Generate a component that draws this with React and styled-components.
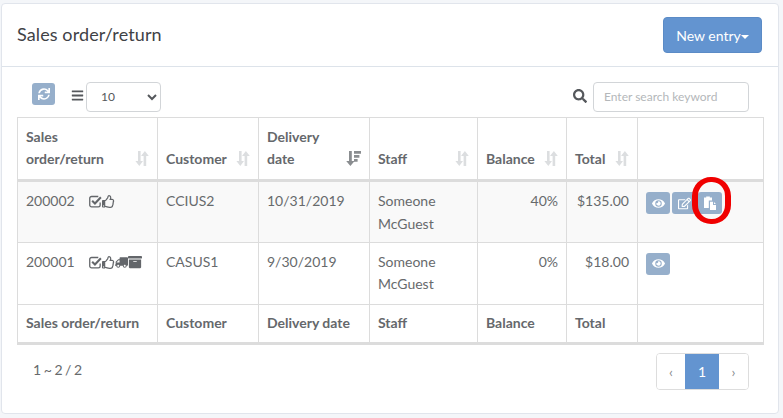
import styled, { createGlobalStyle } from 'styled-components';
import {
  FaArchive,
  FaBars,
  FaEye,
  FaRegEdit,
  FaRegThumbsUp,
  FaSearch,
  FaSync,
  FaTruck,
} from 'react-icons/fa';

const GlobalStyle = createGlobalStyle`
  html, body {
    margin: 0;
    padding: 0;
    background: #f4f6f9;
  }
  body {
    font-family: Lato, "Liberation Sans", sans-serif;
    font-size: 14px;
    color: #676a6c;
  }
`;

function PasteIcon() {
  return (
    <svg width="14" height="14" viewBox="0 0 14 14" fill="#ffffff">
      <path d="M1 1.5h2.2V.6h3.6v.9H9v3H5.8V12H1z" />
      <path d="M7 5.8h3v3.2h3V14H7z" />
      <path d="M11 5.9 12.9 8H11z" />
    </svg>
  );
}

function CheckIcon() {
  return (
    <svg width="13" height="13" viewBox="0 0 14 14" fill="none" stroke="#63666a">
      <path
        strokeWidth="1.4"
        d="M12 8v2.8a2 2 0 0 1-2 2H2.8a2 2 0 0 1-2-2V3.6a2 2 0 0 1 2-2H10"
      />
      <path strokeWidth="2.2" d="M3.4 6.2l3 3 6.4-6.8" />
    </svg>
  );
}

const columns = [
  { label: 'Sales order/return', head: ['Sales', 'order/return'], width: 140 },
  { label: 'Customer', head: ['Customer'], width: 101 },
  { label: 'Delivery date', head: ['Delivery', 'date'], width: 111, sorted: true },
  { label: 'Staff', head: ['Staff'], width: 108 },
  { label: 'Balance', head: ['Balance'], width: 89 },
  { label: 'Total', head: ['Total'], width: 71 },
  { label: '', head: [], width: 126, noSort: true },
];

const rows = [
  {
    id: '200002',
    customer: 'CCIUS2',
    date: '10/31/2019',
    balance: '40%',
    total: '$135.00',
    shipped: false,
    height: 61.5,
    actions: [FaEye, FaRegEdit, PasteIcon],
  },
  {
    id: '200001',
    customer: 'CASUS1',
    date: '9/30/2019',
    balance: '0%',
    total: '$18.00',
    shipped: true,
    height: 62,
    actions: [FaEye],
  },
];

function SortIcon({ sorted }) {
  if (sorted) {
    return (
      <svg width="15" height="15" viewBox="0 0 15 15" fill="#8a8d90">
        <path d="M3 0h2.8v10H8.6l-4.2 5L.2 10H3z" />
        <path d="M8 0h7v2.8H8zM8 4h5.4v2.8H8zM8 8h3.6v2.8H8z" />
      </svg>
    );
  }
  return (
    <svg width="14" height="15" viewBox="0 0 14 15" fill="#dcdee0">
      <path d="M3 0h2.6v10H8l-3.7 5L.4 10H3z" />
      <path d="M8.6 15h2.6V5h2.6L9.9 0 6 5h2.6z" />
    </svg>
  );
}

export default function App() {
  return (
    <>
      <GlobalStyle />
      <Card>
        <CardHeader>
          <Title>Sales order/return</Title>
          <NewButton>
            New entry
            <Caret />
          </NewButton>
        </CardHeader>
        <CardBody>
          <Toolbar>
            <ToolLeft>
              <RefreshButton>
                <FaSync />
              </RefreshButton>
              <BarsIcon>
                <FaBars />
              </BarsIcon>
              <PageSize defaultValue="10">
                <option value="10">10</option>
                <option value="25">25</option>
              </PageSize>
            </ToolLeft>
            <ToolRight>
              <SearchIcon>
                <FaSearch />
              </SearchIcon>
              <SearchInput placeholder="Enter search keyword" />
            </ToolRight>
          </Toolbar>
          <Table>
            <colgroup>
              {columns.map((c, i) => (
                <col key={i} style={{ width: c.width }} />
              ))}
            </colgroup>
            <thead>
              <tr>
                {columns.map((c, i) => (
                  <Th key={i}>
                    <HeadInner>
                      <span>
                        {c.head.map((line) => (
                          <HeadLine key={line}>{line}</HeadLine>
                        ))}
                      </span>
                      {!c.noSort && <SortIcon sorted={c.sorted} />}
                    </HeadInner>
                  </Th>
                ))}
              </tr>
            </thead>
            <tbody>
              {rows.map((row, index) => (
                <Row key={row.id} $striped={index === 0} $h={row.height}>
                  <Td>
                    <IdCell>
                      {row.id}
                      <StatusIcons>
                        <CheckIcon />
                        <FaRegThumbsUp />
                        {row.shipped && <FlippedTruck />}
                        {row.shipped && <WideBox />}
                      </StatusIcons>
                    </IdCell>
                  </Td>
                  <Td>{row.customer}</Td>
                  <Td>{row.date}</Td>
                  <Td>
                    Someone
                    <br />
                    McGuest
                  </Td>
                  <Td $right>{row.balance}</Td>
                  <Td $right>{row.total}</Td>
                  <Td>
                    <Actions>
                      {row.actions.map((Icon, i) => (
                        <ActionButton key={i}>
                          <Icon />
                        </ActionButton>
                      ))}
                    </Actions>
                  </Td>
                </Row>
              ))}
            </tbody>
            <tfoot>
              <tr>
                {columns.map((c, i) => (
                  <FootCell key={i}>{c.label}</FootCell>
                ))}
              </tr>
            </tfoot>
          </Table>
          <Pager>
            <PagerInfo>1 ~ 2 / 2</PagerInfo>
            <Pagination>
              <PageLink $w={28}>‹</PageLink>
              <PageLink $w={34} $active>
                1
              </PageLink>
              <PageLink $w={29}>›</PageLink>
            </Pagination>
          </Pager>
        </CardBody>
        <Highlight />
      </Card>
    </>
  );
}

const Card = styled.div`
  position: relative;
  box-sizing: border-box;
  width: 778px;
  height: 411px;
  margin: 3px 0 0 1px;
  background: #ffffff;
  border: 1px solid #e1e5ec;
  border-radius: 4px;
`;

const CardHeader = styled.div`
  box-sizing: border-box;
  height: 63px;
  padding: 13px 16px 0 15px;
  display: flex;
  justify-content: space-between;
  align-items: flex-start;
  border-bottom: 1px solid #dde3ea;
`;

const Title = styled.h2`
  margin: 5px 0 0;
  font-size: 18px;
  line-height: 24px;
  letter-spacing: 0.1px;
  font-weight: 400;
  color: #3f4246;
`;

const NewButton = styled.button`
  box-sizing: border-box;
  width: 99px;
  height: 36px;
  padding: 0;
  background: #6394d0;
  border: 1px solid #5b8bc6;
  border-radius: 4px;
  color: #ffffff;
  font-family: inherit;
  font-size: 14px;
`;

const Caret = styled.span`
  display: inline-block;
  vertical-align: middle;
  border-top: 4px solid #ffffff;
  border-left: 4px solid transparent;
  border-right: 4px solid transparent;
`;

const CardBody = styled.div`
  padding: 15px 15px 0;
`;

const Toolbar = styled.div`
  height: 35px;
  display: flex;
  justify-content: space-between;
  align-items: flex-start;
`;

const ToolLeft = styled.div`
  display: flex;
  align-items: center;
  padding-left: 15px;
`;

const ToolRight = styled.div`
  display: flex;
  align-items: center;
  gap: 6px;
  padding-right: 14px;
`;

const RefreshButton = styled.button`
  box-sizing: border-box;
  width: 23px;
  height: 22px;
  margin-top: -7px;
  padding: 0;
  display: flex;
  align-items: center;
  justify-content: center;
  background: #96afcb;
  border: 0;
  border-radius: 3px;
  color: #ffffff;
  font-size: 12px;
`;

const BarsIcon = styled.span`
  display: flex;
  margin: -4px 2px 0 16px;
  font-size: 13px;
  color: #55585c;
`;

const PageSize = styled.select`
  box-sizing: border-box;
  width: 75px;
  height: 30px;
  padding: 0 0 2px 10px;
  background: #ffffff;
  border: 1px solid #d2d5d8;
  border-radius: 4px;
  color: #55585c;
  font-family: inherit;
  font-size: 12px;
`;

const SearchIcon = styled.span`
  display: flex;
  margin-top: -2px;
  font-size: 14px;
  color: #55585c;
`;

const SearchInput = styled.input`
  box-sizing: border-box;
  width: 156px;
  height: 30px;
  padding: 0 10px 2px;
  background: #ffffff;
  border: 1px solid #d2d5d8;
  border-radius: 4px;
  font-family: inherit;
  font-size: 12px;

  &::placeholder {
    color: #b4b7ba;
    opacity: 1;
  }
`;

const Table = styled.table`
  box-sizing: border-box;
  width: 746px;
  table-layout: fixed;
  border-collapse: collapse;
  border: 1px solid #dcdcdc;
`;

const Th = styled.th`
  height: 62px;
  padding: 8px 8px 9px;
  box-sizing: border-box;
  border: 1px solid #dcdcdc;
  border-bottom: 3px solid #dcdcdc;
  text-align: left;
  vertical-align: bottom;
  font-size: 14px;
  line-height: 22px;
  font-weight: 700;
  color: #65686c;
`;

const HeadInner = styled.div`
  display: flex;
  justify-content: space-between;
  align-items: flex-end;

  svg {
    margin-bottom: 4px;
    flex: none;
  }
`;

const HeadLine = styled.span`
  display: block;
`;

const Row = styled.tr`
  height: ${(p) => p.$h}px;
  background: ${(p) => (p.$striped ? '#f9f9f9' : '#ffffff')};
`;

const Td = styled.td`
  box-sizing: border-box;
  padding: 8px 8px 6px;
  border: 1px solid #dcdcdc;
  vertical-align: top;
  line-height: 22.5px;
  font-size: 14px;
  color: #676a6c;
  text-align: ${(p) => (p.$right ? 'right' : 'left')};
`;

const IdCell = styled.div`
  display: flex;
  align-items: center;
  height: 23px;
`;

const StatusIcons = styled.span`
  display: flex;
  align-items: center;
  margin-left: 14px;
  font-size: 13px;
  color: #63666a;
`;

const FlippedTruck = styled(FaTruck)`
  transform: scaleX(-1);
`;

const WideBox = styled(FaArchive)`
  font-size: 14px;
`;

const Actions = styled.div`
  display: flex;
  gap: 2px;
  margin-top: 2px;
`;

const ActionButton = styled.button`
  box-sizing: border-box;
  width: 24px;
  height: 22px;
  padding: 0;
  display: flex;
  align-items: center;
  justify-content: center;
  background: #96afcb;
  border: 0;
  border-radius: 3px;
  color: #ffffff;
  font-size: 13px;
`;

const FootCell = styled.td`
  height: 39px;
  box-sizing: border-box;
  padding: 0 8px 2px;
  border: 1px solid #dcdcdc;
  border-bottom: 3px solid #dcdcdc;
  font-weight: 700;
  font-size: 14px;
  color: #65686c;
`;

const Pager = styled.div`
  display: flex;
  justify-content: space-between;
  align-items: flex-start;
  padding-top: 8px;
`;

const PagerInfo = styled.div`
  padding: 7px 0 0 16px;
  font-size: 14px;
  line-height: 20px;
  word-spacing: -1px;
`;

const Pagination = styled.div`
  display: flex;
  height: 37px;
  margin-right: 14px;
  border: 1px solid #dddddd;
  border-radius: 4px;
  box-sizing: border-box;
  overflow: hidden;
`;

const PageLink = styled.span`
  display: flex;
  align-items: center;
  justify-content: center;
  width: ${(p) => p.$w}px;
  background: ${(p) => (p.$active ? '#6394d0' : '#ffffff')};
  color: ${(p) => (p.$active ? '#ffffff' : '#8a8d90')};
  font-size: 14px;
`;

const Highlight = styled.div`
  position: absolute;
  left: 690px;
  top: 173px;
  width: 39px;
  height: 47px;
  box-sizing: border-box;
  border-style: solid;
  border-color: #f00000;
  border-width: 5px 6px;
  border-radius: 19px;
  pointer-events: none;
`;
